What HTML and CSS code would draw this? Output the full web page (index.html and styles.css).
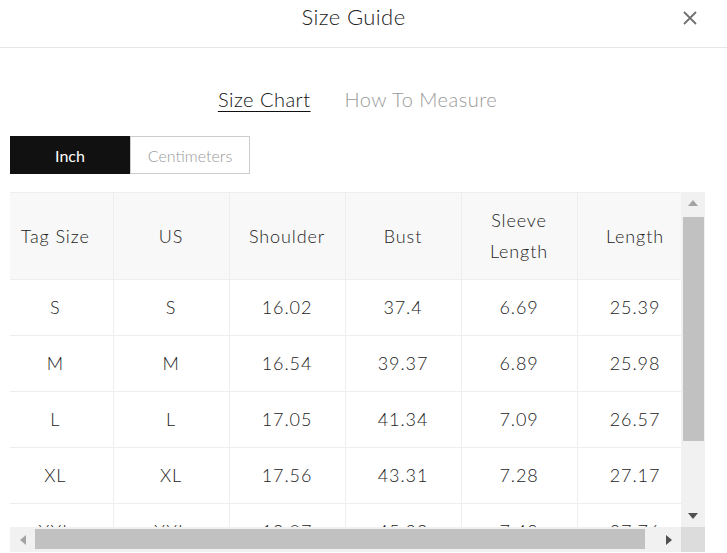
FILE: index.html
```html
<!DOCTYPE html>
<html lang="en">
<head>
<meta charset="utf-8">
<title>Size Guide</title>
<link rel="stylesheet" href="styles.css">
</head>
<body>
<div class="modal">
  <header class="modal-head">
    <h2 class="modal-title">Size Guide</h2>
    <button class="close" aria-label="Close">
      <svg width="14" height="14" viewBox="0 0 14 14"><path d="M1 1L13 13M13 1L1 13" stroke="#707070" stroke-width="1.8" fill="none"/></svg>
    </button>
  </header>
  <nav class="tabs">
    <a class="tab tab-active">Size Chart</a>
    <a class="tab">How To Measure</a>
  </nav>
  <div class="units">
    <button class="unit unit-active">Inch</button>
    <button class="unit">Centimeters</button>
  </div>
  <div class="table-frame">
    <div class="table-viewport">
      <table class="size-table">
        <colgroup>
          <col class="c-first"><col class="c"><col class="c"><col class="c"><col class="c"><col class="c">
        </colgroup>
        <thead>
          <tr><th>Tag Size</th><th>US</th><th>Shoulder</th><th>Bust</th><th class="th-wrap">Sleeve Length</th><th>Length</th></tr>
        </thead>
        <tbody>
          <tr><td>S</td><td>S</td><td>16.02</td><td>37.4</td><td>6.69</td><td>25.39</td></tr>
          <tr><td>M</td><td>M</td><td>16.54</td><td>39.37</td><td>6.89</td><td>25.98</td></tr>
          <tr><td>L</td><td>L</td><td>17.05</td><td>41.34</td><td>7.09</td><td>26.57</td></tr>
          <tr><td>XL</td><td>XL</td><td>17.56</td><td>43.31</td><td>7.28</td><td>27.17</td></tr>
          <tr><td>XXL</td><td>XXL</td><td>18.07</td><td>45.28</td><td>7.48</td><td>27.76</td></tr>
          <tr><td>3XL</td><td>3XL</td><td>18.58</td><td>47.24</td><td>7.68</td><td>28.35</td></tr>
        </tbody>
      </table>
    </div>
    <div class="vbar">
      <span class="sb-btn"><span class="arrow arrow-up"></span></span>
      <span class="vtrack"><span class="vthumb"></span></span>
      <span class="sb-btn"><span class="arrow arrow-down"></span></span>
    </div>
    <div class="hbar">
      <span class="sb-btn sb-btn-h"><span class="arrow arrow-left"></span></span>
      <span class="htrack"><span class="hthumb"></span></span>
      <span class="sb-btn sb-btn-h"><span class="arrow arrow-right"></span></span>
    </div>
    <div class="corner"></div>
  </div>
</div>
</body>
</html>
```

FILE: styles.css
```css
* { box-sizing: border-box; }

html, body {
  margin: 0;
  padding: 0;
  background: #fff;
}

body {
  font-family: Lato, "Liberation Sans", sans-serif;
  font-weight: 300;
  color: #333;
  width: 727px;
  height: 553px;
  overflow: hidden;
}

.modal {
  display: flex;
  flex-direction: column;
}

.modal-head {
  position: relative;
  height: 48px;
  border-bottom: 1px solid #e6e6e6;
  display: flex;
  align-items: center;
  justify-content: center;
  padding: 0 20px 14px 0;
}

.modal-title {
  margin: 0;
  font-size: 22px;
  font-weight: 300;
  color: #222;
  letter-spacing: 0.4px;
  line-height: 26px;
}

.close {
  position: absolute;
  right: 30px;
  top: 11px;
  width: 14px;
  height: 14px;
  padding: 0;
  border: 0;
  background: none;
  display: flex;
}

.tabs {
  display: flex;
  justify-content: center;
  gap: 34px;
  padding-top: 38px;
  padding-right: 12px;
}

.tab {
  font-size: 20px;
  font-weight: 300;
  line-height: 26px;
  color: #999;
  letter-spacing: 0.5px;
}

.tab-active {
  color: #111;
  text-decoration: underline;
  text-underline-offset: 4px;
  text-decoration-thickness: 1px;
}

.units {
  display: flex;
  margin: 24px 0 0 10px;
}

.unit {
  width: 120px;
  height: 38px;
  border: 1px solid #ccc;
  background: #fff;
  color: #999;
  font-family: Lato, "Liberation Sans", sans-serif;
  font-weight: 300;
  font-size: 16px;
  padding: 0;
}

.unit-active {
  background: #111;
  border-color: #111;
  color: #fff;
  font-weight: 400;
}

/* table with drawn scrollbars */
.table-frame {
  margin: 18px 0 0 10px;
  display: grid;
  grid-template-columns: 671px 24px;
  grid-template-rows: 335px 25px;
  width: 695px;
}

.table-viewport {
  overflow: hidden;
}

.size-table {
  border-collapse: collapse;
  table-layout: fixed;
  width: 695px;
}

.c-first { width: 103px; }
.c { width: 116px; }
.c:last-child { width: 128px; }

.size-table th,
.size-table td {
  border: 1px solid #eee;
  text-align: center;
  font-size: 18px;
  font-weight: 300;
  line-height: 31px;
  padding: 12px 8px;
  color: #222;
  letter-spacing: 0.9px;
  white-space: nowrap;
}

.size-table .th-wrap {
  white-space: normal;
  padding: 12px 18px;
}

.size-table th:first-child,
.size-table td:first-child {
  border-left: 0;
  padding-left: 2px;
  padding-right: 14px;
}

.size-table th:last-child,
.size-table td:last-child { padding-right: 20px; }

.size-table thead th {
  background: #f8f8f8;
}

.vbar {
  display: flex;
  flex-direction: column;
  background: #f1f1f1;
}

.hbar {
  display: flex;
  background: #f1f1f1;
}

.corner {
  background: #dcdcdc;
}

.sb-btn {
  flex: 0 0 22px;
  height: 22px;
  display: flex;
  align-items: center;
  justify-content: center;
}

.sb-btn-h {
  flex: 0 0 25px;
  height: 25px;
}

.vtrack {
  flex: 1;
  padding: 3px 1px 64px 2px;
  display: flex;
}

.vthumb {
  flex: 1;
  background: #c1c1c1;
}

.htrack {
  flex: 1;
  padding: 2px 11px 3px 0;
  display: flex;
}

.hthumb {
  flex: 1;
  background: #c1c1c1;
}

.arrow {
  width: 0;
  height: 0;
  border-style: solid;
  border-color: transparent;
}

.arrow-up {
  border-width: 0 5.5px 6px 5.5px;
  border-bottom-color: #a3a3a3;
}

.arrow-down {
  border-width: 6px 5.5px 0 5.5px;
  border-top-color: #505050;
}

.arrow-left {
  border-width: 5.5px 6px 5.5px 0;
  border-right-color: #a3a3a3;
}

.arrow-right {
  border-width: 5.5px 0 5.5px 6px;
  border-left-color: #505050;
}
```
